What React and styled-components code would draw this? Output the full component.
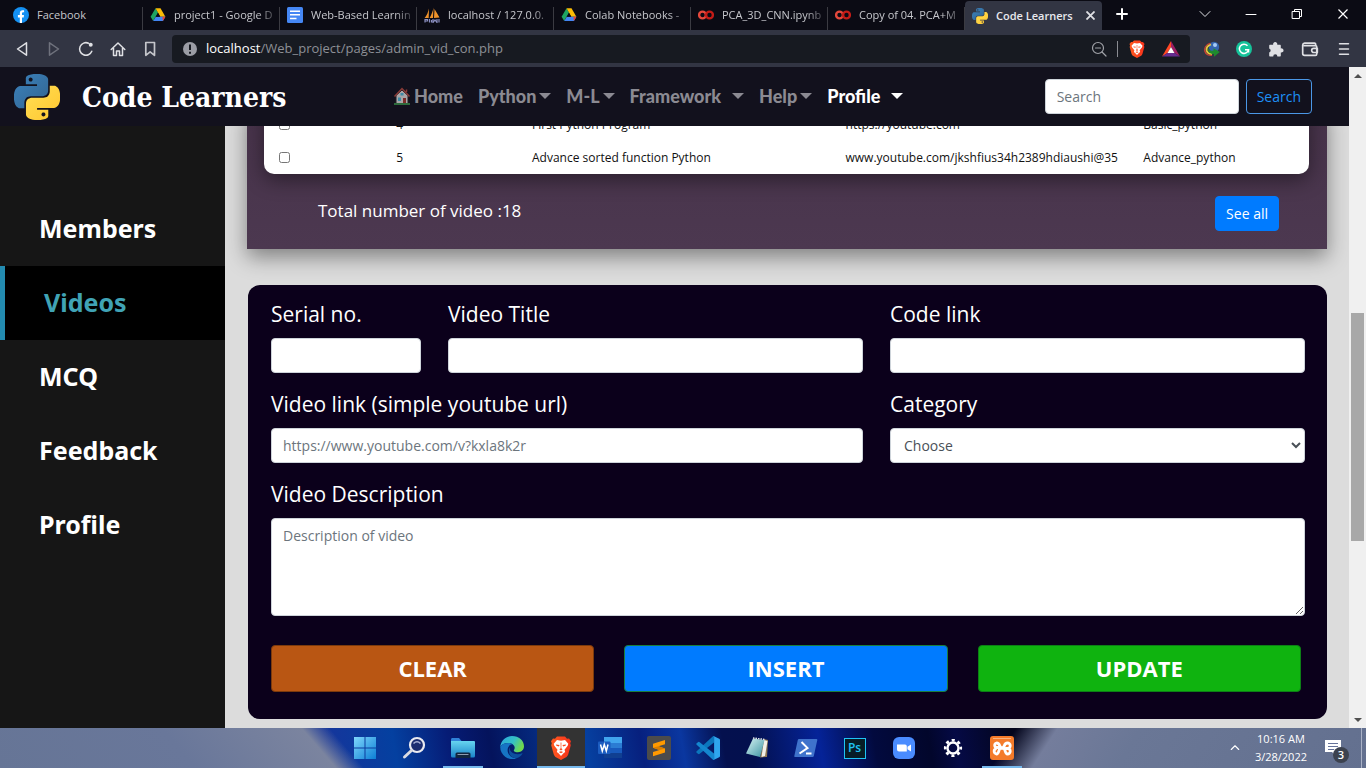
import React from "react";
import styled, { createGlobalStyle, css } from "styled-components";

const ui = `"Open Sans", "Noto Sans", sans-serif`;

const GlobalStyle = createGlobalStyle`
  *, *::before, *::after { box-sizing: border-box; }
  body { margin: 0; font-family: ${ui}; background: #dcdcdc; }
  button, input, select, textarea { font-family: inherit; margin: 0; }
  svg { display: block; flex: none; }
`;

const Desktop = styled.div`
  height: 100vh;
  display: flex;
  flex-direction: column;
  overflow: hidden;
`;

/* ---------- browser window ---------- */

const TabStrip = styled.header`
  height: 30px;
  flex: none;
  display: flex;
  padding-left: 6px;
  background: #0b0b14;
`;

const Tab = styled.div`
  flex: 0 1 137px;
  min-width: 0;
  display: flex;
  align-items: center;
  gap: 8px;
  padding: 0 4px 0 7px;
  font-size: 11px;
  line-height: 16px;
  color: #c6c7cc;
  background: linear-gradient(#3b3b42, #3b3b42) right 7px / 1px 23px no-repeat;
  ${(p) =>
    p.$active &&
    css`
      margin-top: 1px;
      color: #e8e9ee;
      font-weight: 600;
      background: #323543;
      border-radius: 4px 4px 0 0;
    `}
`;

const TabTitle = styled.span`
  flex: 1;
  min-width: 0;
  white-space: nowrap;
  ${(p) => p.$fade && css`mask-image: linear-gradient(90deg, #000 82%, rgba(0, 0, 0, 0.2));`}
`;

const IconButton = styled.button`
  flex: none;
  width: ${(p) => p.$width || 32}px;
  height: 28px;
  padding: 0;
  border: 0;
  background: none;
  color: ${(p) => p.$color || "#dfe0e4"};
  display: flex;
  align-items: center;
  justify-content: center;
`;

const NewTab = styled(IconButton)`
  margin-right: auto;
`;

const Toolbar = styled.div`
  height: 37px;
  flex: none;
  display: flex;
  align-items: center;
  padding: 0 6px;
  background: #323543;
`;

const AddressBar = styled.div`
  flex: 1;
  min-width: 0;
  height: 28px;
  display: flex;
  align-items: center;
  padding: 0 2px 0 10px;
  margin: 0 6px;
  border-radius: 4px;
  background: #171a21;
`;

const AddressInput = styled.div`
  flex: 1;
  min-width: 0;
  padding: 0 0 2px 8px;
  font-size: 13px;
  line-height: 20px;
  color: #8d9096;
  white-space: nowrap;
`;

const Host = styled.span`
  color: #fff;
`;

const Separator = styled.span`
  width: 1px;
  height: 16px;
  margin: 0 2px;
  background: #8a8c92;
`;

/* ---------- page ---------- */

const Viewport = styled.div`
  flex: 1;
  min-height: 0;
  display: flex;
`;

const Page = styled.div`
  flex: 1;
  min-width: 0;
  display: flex;
  flex-direction: column;
`;

const Navbar = styled.nav`
  position: relative;
  z-index: 2;
  height: 59px;
  flex: none;
  display: flex;
  align-items: center;
  padding: 0 37px 0 14px;
  background: #12111d;
`;

const Brand = styled.a`
  flex: none;
  width: 379px;
  display: flex;
  align-items: center;
  gap: 22px;
  color: #fff;
  text-decoration: none;
  white-space: nowrap;
  font: bold 28px/34px "DejaVu Serif Condensed", "DejaVu Serif", serif;
  font-stretch: condensed;
`;

const BrandName = styled.span`
  padding-top: 3px;
`;

const NavLinks = styled.ul`
  flex: 1;
  display: flex;
  gap: 15px;
  margin: 0;
  padding: 0 0 2px;
  list-style: none;
`;

const NavLink = styled.a`
  display: flex;
  align-items: center;
  gap: ${(p) => (p.$wide ? 11 : 3)}px;
  font: 900 18px/24px Lato, sans-serif;
  color: ${(p) => (p.$active ? "#fff" : "#8b8a92")};
  text-decoration: none;
  white-space: nowrap;
`;

const Caret = styled.span`
  border: 6px solid transparent;
  border-top-color: currentColor;
  border-bottom: 0;
`;

const SearchForm = styled.form`
  display: flex;
  align-items: center;
  gap: 7px;
`;

const control = css`
  width: 100%;
  height: 35px;
  padding: 0 11px;
  border: 1px solid #ced4da;
  border-radius: 4px;
  background: #fff;
  color: #495057;
  font-size: 14px;
  line-height: 20px;
  &::placeholder { color: #6c757d; opacity: 1; }
`;

const TextInput = styled.input`
  ${control}
`;

const SearchInput = styled(TextInput)`
  width: 194px;
`;

const SearchButton = styled.button`
  height: 35px;
  padding: 0 10px;
  border: 1px solid #4b97e6;
  border-radius: 4px;
  background: transparent;
  color: #1e90f5;
  font-size: 14px;
  line-height: 20px;
`;

const Body = styled.div`
  flex: 1;
  min-height: 0;
  display: flex;
`;

const Sidebar = styled.aside`
  flex: 0 0 225px;
  padding-top: 66px;
  background: #161616;
`;

const SideLink = styled.a`
  display: flex;
  align-items: center;
  height: 74px;
  padding: 0 0 3px 39px;
  font: bold 25px/36px "Noto Sans", sans-serif;
  color: #fff;
  text-decoration: none;
  ${(p) =>
    p.$active &&
    css`
      border-left: 5px solid #238bb0;
      background: #000;
      color: #40a3b5;
    `}
`;

const Main = styled.main`
  flex: 1;
  min-width: 0;
  overflow: hidden;
  padding: 0 22px;
  background: #dcdcdc;
`;

/* The list is scrolled so that only its last rows remain under the navbar. */
const ListPanel = styled.section`
  margin-top: -18px;
  padding: 0 18px 0 17px;
  background: linear-gradient(#47334a, #4c3850);
  box-shadow: 0 8px 20px rgba(0, 0, 0, 0.42);
`;

const VideoTable = styled.table`
  width: 100%;
  table-layout: fixed;
  border-spacing: 0;
  background: #fff;
  border-radius: 0 0 10px 10px;
  box-shadow: 0 6px 20px rgba(0, 0, 0, 0.42);
  font-size: 12px;
  line-height: 17px;
  color: #111;
`;

const Col = styled.col`
  width: ${(p) => p.$share}%;
`;

const Cell = styled.td`
  height: 33px;
  padding: 0 12px;
  white-space: nowrap;
`;

const RowCheck = styled.input`
  display: block;
  width: 11px;
  height: 11px;
  margin: 0 3px;
`;

const ListFooter = styled.div`
  display: flex;
  justify-content: space-between;
  align-items: center;
  padding: 22px 30px 18px 54px;
`;

const Total = styled.p`
  margin: 0 0 6px;
  color: #fff;
  font-size: 17px;
  line-height: 24px;
`;

const SeeAll = styled.button`
  height: 35px;
  padding: 0 10px;
  border: 1px solid #007bff;
  border-radius: 4px;
  background: #007bff;
  color: #fff;
  font-size: 14px;
  line-height: 20px;
`;

const VideoForm = styled.form`
  margin: 36px 0 9px 1px;
  padding: 14px 22px 27px 23px;
  border-radius: 12px;
  background: #0b001b;
`;

const Fields = styled.div`
  display: grid;
  grid-template-columns: 150fr 415fr 415fr;
  gap: 16px 27px;
`;

const Field = styled.div`
  min-width: 0;
  grid-column: span ${(p) => p.$span || 1};
  display: flex;
  flex-direction: column;
`;

const Label = styled.label`
  margin-bottom: 9px;
  color: #fff;
  font-size: 21px;
  line-height: 30px;
`;

const Select = styled.select`
  ${control}
  padding: 0 9px;
`;

const TextArea = styled.textarea`
  ${control}
  height: 98px;
  padding: 7px 11px;
`;

const Actions = styled.div`
  display: grid;
  grid-template-columns: repeat(3, 1fr);
  gap: 30px;
  margin: 29px 4px 0 0;
`;

const ActionButton = styled.button`
  height: 47px;
  padding: 0 0 2px;
  border: 1px solid ${(p) => p.$edge};
  border-radius: 4px;
  background: ${(p) => p.$fill};
  color: #fff;
  font-size: 22px;
  line-height: 30px;
  font-weight: 700;
`;

const Scrollbar = styled.div`
  flex: 0 0 17px;
  display: flex;
  flex-direction: column;
  align-items: center;
  background: #f0f0f0;
`;

const ScrollArrow = styled.span`
  height: 17px;
  display: flex;
  align-items: center;
  color: #505050;
`;

const ScrollGap = styled.span`
  flex: ${(p) => p.$grow};
`;

const ScrollThumb = styled.span`
  flex: 228;
  width: 13px;
  background: #a8a8a8;
`;

/* ---------- taskbar ---------- */

const Taskbar = styled.footer`
  height: 40px;
  flex: none;
  display: grid;
  grid-template-columns: 1fr auto 1fr;
  background:
    linear-gradient(49deg, #667596 0%, #69779a 14%, #7b849f 24%, transparent 26%),
    linear-gradient(123deg, transparent 73%, #747d9c 76%, #6a7796 82%, #63708f 100%),
    linear-gradient(
      80deg,
      #16359b 24%, #0440a0 29%, #061c76 33%, #04135c 36%, #0640a0 43%,
      #07207e 47%, #0a37a0 50%, #04104e 53%, #03104e 55%, #052398 60%,
      #020a3e 64%, #02062b 68%, #050a45 70%, #03051c 74%
    );
`;

const TaskIcons = styled.div`
  grid-column: 2;
  display: flex;
  gap: 1px;
`;

const TaskButton = styled.button`
  width: 48px;
  padding: 0;
  border: 0;
  display: flex;
  align-items: center;
  justify-content: center;
  background: ${(p) => (p.$active ? "#333" : "none")};
  ${(p) =>
    p.$bar &&
    css`
      background-image: linear-gradient(#76b9ed, #76b9ed);
      background-repeat: no-repeat;
      background-position: bottom center;
      background-size: ${p.$bar}px 2px;
    `}
`;

const Tray = styled.div`
  display: flex;
  align-items: center;
  justify-content: flex-end;
  gap: 14px;
  padding-right: 4px;
  color: #fff;
`;

const Clock = styled.time`
  font-size: 11px;
  line-height: 18px;
  text-align: center;
  white-space: pre-line;
`;

const Notices = styled.span`
  position: relative;
  display: flex;
  padding: 0 20px 0 4px;
  height: 40px;
  align-items: center;
  border-right: 1px solid #aab2c6;
`;

const NoticeCount = styled.span`
  position: absolute;
  left: 12px;
  top: 19px;
  width: 16px;
  height: 16px;
  border-radius: 50%;
  background: #3c424f;
  font-size: 11px;
  font-weight: 600;
  line-height: 16px;
  text-align: center;
`;

/* ---------- drawings ---------- */

const Python = ({ size }) => (
  <svg width={size} height={size} viewBox="0 0 24 24" aria-hidden="true">
    <defs>
      <linearGradient id="pyBlue" x2="1" y2="1"><stop stopColor="#3b82bd" /><stop offset="1" stopColor="#32648f" /></linearGradient>
      <linearGradient id="pyGold" x2="1" y2="1"><stop stopColor="#ffdf55" /><stop offset="1" stopColor="#ffc62f" /></linearGradient>
    </defs>
    <path fill="url(#pyBlue)" d="M14.25.18l.9.2.73.26.59.3.45.32.34.34.25.34.16.33.1.3.04.26.02.2-.01.13V8.5l-.05.63-.13.55-.21.46-.26.38-.3.31-.33.25-.35.19-.35.14-.33.1-.3.07-.26.04-.21.02H8.77l-.69.05-.59.14-.5.22-.41.27-.33.32-.27.35-.2.36-.15.37-.1.35-.07.32-.04.27-.02.21v3.06H3.17l-.21-.03-.28-.07-.32-.12-.35-.18-.36-.26-.36-.36-.35-.46-.32-.59-.28-.73-.21-.88-.14-1.05-.05-1.23.06-1.22.16-1.04.24-.87.32-.71.36-.57.4-.44.42-.33.42-.24.4-.16.36-.1.32-.05.24-.01h.16l.06.01h8.16v-.83H6.18l-.01-2.75-.02-.37.05-.34.11-.31.17-.28.25-.26.31-.23.38-.2.44-.18.51-.15.58-.12.64-.1.71-.06.77-.04.84-.02 1.27.05zm-6.3 1.98l-.23.33-.08.41.08.41.23.34.33.22.41.09.41-.09.33-.22.23-.34.08-.41-.08-.41-.23-.33-.33-.22-.41-.09-.41.09z" />
    <path fill="url(#pyGold)" d="M21.1 6.11l.28.06.32.12.35.18.36.27.36.35.35.47.32.59.28.73.21.88.14 1.04.05 1.23-.06 1.23-.16 1.04-.24.86-.32.71-.36.57-.4.45-.42.33-.42.24-.4.16-.36.09-.32.05-.24.02-.16-.01h-8.22v.82h5.84l.01 2.76.02.36-.05.34-.11.31-.17.29-.25.25-.31.24-.38.2-.44.17-.51.15-.58.13-.64.09-.71.07-.77.04-.84.01-1.27-.04-1.07-.14-.9-.2-.73-.25-.59-.3-.45-.33-.34-.34-.25-.34-.16-.33-.1-.3-.04-.25-.02-.2.01-.13v-5.34l.05-.64.13-.54.21-.46.26-.38.3-.32.33-.24.35-.2.35-.14.33-.1.3-.06.26-.04.21-.02.13-.01h5.84l.69-.05.59-.14.5-.21.41-.28.33-.32.27-.35.2-.36.15-.36.1-.35.07-.32.04-.28.02-.21V6.07h2.09l.14.01zm-6.47 14.25l-.23.33-.08.41.08.41.23.33.33.23.41.08.41-.08.33-.23.23-.33.08-.41-.08-.41-.23-.33-.33-.23-.41-.08-.41.08z" />
  </svg>
);

const Facebook = () => (
  <svg width="16" height="16" viewBox="0 0 16 16">
    <circle cx="8" cy="8" r="8" fill="#1490f2" />
    <path fill="#fff" d="M6.8 16v-5.6H4.9V8h1.9V6.4c0-2 1.1-3.1 2.8-3.1.8 0 1.5.1 1.5.1v1.9h-.9c-.9 0-1.2.6-1.2 1.2V8h2l-.3 2.4H9V16z" />
  </svg>
);

const Drive = () => (
  <svg width="16" height="16" viewBox="0 0 16 16">
    <path fill="#1ea362" d="M5.5 1.2 8 5.5 3.2 14 .6 9.7z" />
    <path fill="#fbbc04" d="M5.5 1.2h5l4.9 8.5h-5z" />
    <path fill="#4285f4" d="M5.8 9.7h9.6L12.9 14H3.2z" />
    <path fill="#ea4335" d="m12.9 14 2.5-4.3h-3z" />
    <path fill="#0b0b14" d="m8 6 2.1 3.7H5.9z" />
  </svg>
);

const Docs = () => (
  <svg width="16" height="16" viewBox="0 0 16 16">
    <rect width="16" height="16" rx="1.5" fill="#4587f4" />
    <path stroke="#fff" strokeWidth="1.6" d="M3 4.2h10M3 7.8h10M3 11.5h6.5" />
  </svg>
);

const Admin = () => (
  <svg width="16" height="16" viewBox="0 0 16 16">
    <path fill="#f0932b" d="M5 1.5 4.7 11H.6C2.7 8.5 4.3 5 5 1.5zM9.5.5 9 11H5.6C7.5 7.7 8.9 4 9.5.5zM10.5 2c1.5 2.6 3.7 6 5 8.600L10 11z" />
    <path stroke="#8b8fc0" strokeWidth="1.2" fill="none" d="M1 15.5v-3h2.500V14H1M5.5 12v3.500M7.5 15.500V13M9 12v3.500l2-2.500 2 2.500V12M15 12v3.500" />
  </svg>
);

const Colab = () => (
  <svg width="16" height="16" viewBox="0 0 16 16" fill="none" strokeWidth="2.4">
    <circle cx="4.5" cy="8" r="3.4" stroke="#e5483c" />
    <circle cx="11.5" cy="8" r="3.4" stroke="#c41c17" />
  </svg>
);

const Cross = ({ size = 10 }) => (
  <svg width={size} height={size} viewBox="0 0 10 10" fill="none" stroke="currentColor" strokeWidth={size > 9 ? 1.2 : 2}>
    <path d="M.5.5l9 9M9.5.5l-9 9" />
  </svg>
);

const Stroke = ({ size = 16, width = 1.5, children }) => (
  <svg width={size} height={size} viewBox="0 0 16 16" fill="none" stroke="currentColor" strokeWidth={width} strokeLinejoin="round" strokeLinecap="round">
    {children}
  </svg>
);

const Back = () => <Stroke><path d="M12.5 1.8v12.4L3.5 8z" /></Stroke>;
const Forward = () => <Stroke><path d="M3.5 1.8v12.4l9-6.2z" /></Stroke>;
const Reload = () => (
  <Stroke><path d="M13.8 10.2A6.3 6.3 0 1 1 10.5 2.2" /><circle cx="12.7" cy="3.8" r="2" fill="currentColor" stroke="none" /></Stroke>
);
const Home = () => <Stroke><path d="M1.2 8.5 8 2l6.8 6.5M3.5 7v7.5h3V10h3v4.5h3V7" /></Stroke>;
const Bookmark = () => <Stroke width={1.7}><path d="M3.8 1.5h8.7v12.8l-4.4-3.5-4.3 3.5z" /></Stroke>;
const ZoomOut = () => <Stroke width={1.2}><circle cx="7" cy="7" r="5.5" /><path d="m11 11 4 4M4.5 7h5" /></Stroke>;
const Menu = () => <Stroke width={1.5}><path d="M3.5 2.8h9M3.5 8h9M3.5 13.2h9" /></Stroke>;
const Wallet = () => (
  <Stroke size={18} width={1.5}><path d="M13 5V4a1 1 0 0 0-1-1.2H3.3A2 2 0 0 0 1.5 4.6V12A1.7 1.7 0 0 0 3.2 13.7h9.6a1.2 1.2 0 0 0 1.2-1.2V6.2A1.2 1.2 0 0 0 12.8 5H3M14.5 7.5h-3.2a1.8 1.8 0 0 0 0 3.6h3.2z" /></Stroke>
);

const SiteInfo = () => (
  <svg width="16" height="16" viewBox="0 0 16 16">
    <circle cx="8" cy="8" r="7" fill="#9b9da5" />
    <path stroke="#171a21" strokeWidth="2" d="M8 3.5v5.5M8 10.8v2" />
  </svg>
);

const Puzzle = () => (
  <svg width="16" height="16" viewBox="0 0 16 16">
    <path fill="currentColor" d="M2.2 3.8h3a2.1 2.1 0 1 1 4 0h2.6c.6 0 1 .4 1 1v2.6a2.1 2.1 0 1 1 0 4v3c0 .6-.4 1-1 1H9.4a2.1 2.1 0 0 0-4.2 0h-3c-.6 0-1-.4-1-1v-2.9a2.1 2.1 0 0 0 0-4V4.8c0-.6.4-1 1-1z" />
  </svg>
);

const Bat = () => (
  <svg width="18" height="16" viewBox="0 0 18 16">
    <path fill="#ff4724" d="M9 0 0 15.5 5.5 12 9 6z" />
    <path fill="#9e1f63" d="m9 0 9 15.5-5.5-3.5L9 6z" />
    <path fill="#662d91" d="M0 15.5 5.5 12h7l5.5 3.5z" />
    <path fill="#fff" d="m9 6 3.5 6h-7z" />
  </svg>
);

const Globe = () => (
  <svg width="16" height="16" viewBox="0 0 16 16">
    <circle cx="10" cy="6" r="5.2" fill="#3566ad" />
    <path fill="none" stroke="#c94234" strokeWidth="1.4" d="M6.5 2.2C2 3.5 0 7 1 10.5c.8 2.8 4 4.200 7 3.700" />
    <path fill="none" stroke="#e8c93c" strokeWidth="1.8" d="M7 3.5C3.5 4.8 2 7.5 2.8 10c.7 2 3 3 5.2 2.8" />
    <path fill="#1e8b2e" d="M4.5 6c-.5 3 1.500 4.300 5 3.500V7.200l6.300 3.800-5.800 4.700V13C6 13.200 2.800 10.500 4.500 6z" />
    <circle cx="11" cy="4" r="2" fill="#a5cbf5" />
  </svg>
);

const Grammarly = () => (
  <svg width="16" height="16" viewBox="0 0 16 16" fill="none">
    <circle cx="8" cy="8" r="8" fill="#15c39a" />
    <path stroke="#fff" strokeWidth="1.5" d="M11.5 4.8a4.6 4.6 0 1 0 1 4H9M12.5 8.5v3" />
  </svg>
);

const House = () => (
  <svg width="18" height="18" viewBox="0 0 18 18">
    <path fill="#a9a6a8" stroke="#232026" d="M3 8.5 9 3l6 5.5V17H3z" />
    <path stroke="#8a3b37" strokeWidth="1.5" fill="none" d="m1.5 9.5 7.5-8 7.5 8M13.5 2.5V5" />
    <path fill="#7d2c29" d="M10 11h3v6h-3z" />
    <path fill="#3d8ba6" d="M5 10.5h3V14H5zM7.5 6h3v2.5h-3z" />
    <path fill="#2d6b3c" d="M1 16h16v2H1z" />
  </svg>
);

const Brave = ({ size }) => (
  <svg width={size} height={size} viewBox="0 0 24 24">
    <defs><linearGradient id="lion" x2="1"><stop stopColor="#ff5a1f" /><stop offset="1" stopColor="#f7321c" /></linearGradient></defs>
    <path fill="url(#lion)" d="M8 .5h8l2 2.2 2-.2 2 2.8-.8 2 .6 1.9-2.6 9.3q-.5 1.5-1.7 2.4L12 24l-5.5-3.1q-1.200-.9-1.700-2.400L2.200 9.200l.6-1.900-.8-2 2-2.800 2 .2z" />
    <path fill="#fff" d="m8 4 4 .8L16 4l3.3 3.700-.6 2.100-3.200 3.900.7 2.200-1.700 1.300L12 20l-2.500-2.800-1.700-1.300.7-2.200-3.200-3.900-.6-2.100z" />
    <path fill="#fb4a1e" d="m7 8.600 3.600.5-.8 1.300-2.400-.7zM17 8.600l-3.600.5.8 1.300 2.400-.7zM11.600 6.500h.8l-.1 5.800 1.300 1-1.600 1.200-1.600-1.200 1.300-1zM9.800 16 12 15.200l2.200.8L12 17.200z" />
  </svg>
);

const WindowsLogo = () => (
  <svg width="22" height="22" viewBox="0 0 22 22">
    <defs>
      <linearGradient id="win" x2="1" y2="1"><stop stopColor="#7fd6fb" /><stop offset="1" stopColor="#0c7fd6" /></linearGradient>
    </defs>
    <path fill="url(#win)" d="M0 0h10.5v10.5H0zM11.5 0H22v10.5H11.5zM0 11.5h10.5V22H0zM11.5 11.5H22V22H11.5z" />
  </svg>
);

const Magnifier = () => (
  <svg width="24" height="24" viewBox="0 0 24 24" fill="none">
    <circle cx="15" cy="9" r="7" fill="#1b2c70" stroke="#e9eaf0" strokeWidth="2.2" />
    <path stroke="#aab2d8" strokeWidth="1.5" d="M11.5 7.5q3.5-3.5 7 0" />
    <path stroke="#d9dbe2" strokeWidth="3" strokeLinecap="round" d="m9.5 14.5-7 6.5" />
  </svg>
);

const Explorer = () => (
  <svg width="26" height="24" viewBox="0 0 26 24">
    <defs><linearGradient id="fold" x2="0" y2="1"><stop stopColor="#66d5f0" /><stop offset="1" stopColor="#1b84c9" /></linearGradient></defs>
    <path fill="#2f81d8" d="M1 3.5C1 2.7 1.5 2 2.500 2H9l2.500 3H1z" />
    <path fill="url(#fold)" d="M1 5h23q1 0 1 1v14q0 1.500-1.500 1.500h-21Q1 21.500 1 20z" />
    <path fill="#12263f" d="M5.5 22v-4q0-1.500 1.500-1.500h12q1.500 0 1.500 1.500v4z" />
    <path stroke="#8c9bb0" d="M7.5 18.5h11" />
  </svg>
);

const Edge = () => (
  <svg width="24" height="24" viewBox="0 0 24 24">
    <defs>
      <linearGradient id="edgeTop" x2="1" y2=".4"><stop stopColor="#2aa5e0" /><stop offset=".6" stopColor="#35c1c5" /><stop offset="1" stopColor="#6fd84f" /></linearGradient>
    </defs>
    <path fill="url(#edgeTop)" d="M.2 11C.8 4.5 6 0 12 0c7 0 12 4.8 12 10.3 0 3.5-2.7 5.9-6 5.9-2.6 0-4.2-.9-4.2-1.8 0-.6.9-1 .9-2.6C14.7 9.3 12 7 8.5 7 4.5 7 1.5 8.5.2 11z" />
    <path fill="#1674c4" d="M.2 11C1.5 8.5 4.5 7 8.500 7c1.700 0 3 .6 4 1.300C9.500 8.500 7.600 11 7.600 14c0 5 4.500 8.500 9 8.200A12 12 0 0 1 .2 11z" />
    <path fill="#0c4f9e" d="M9.700 11.200C8 13 8.300 22.400 16.600 22.200c2.600-.8 4.600-2.300 5.900-4.500.2-.4-.1-.6-.5-.4-4.500 2-12.500.7-12.300-6.100z" />
  </svg>
);

const Word = () => (
  <svg width="24" height="22" viewBox="0 0 24 22">
    <path fill="#41a5ee" d="M6 0h18v6H6z" />
    <path fill="#2b7cd3" d="M6 6h18v5H6z" />
    <path fill="#185abd" d="M6 11h18v5H6z" />
    <path fill="#103f91" d="M6 16h18v5H6z" />
    <rect y="4.5" width="12.5" height="12.5" rx="1" fill="#1b5cc0" />
    <path fill="none" stroke="#fff" strokeWidth="1.5" d="m2.5 7.5 1.8 6.5 2-6.500 2 6.500L10 7.500" />
  </svg>
);

const Sublime = () => (
  <svg width="24" height="24" viewBox="0 0 24 24">
    <rect width="24" height="24" rx="2" fill="#4b4b4b" />
    <path fill="#ff9a00" d="m6 7.8 12-3.8v4.200L11.500 10.300 18 12.400v4L6 20.200V16l6.500-2.100L6 11.800z" />
    <path fill="#d97e00" d="m6 11.800 6.500 2.100 5.500-1.500-6.500-2.100z" />
  </svg>
);

const VsCode = () => (
  <svg width="24" height="24" viewBox="0 0 24 24">
    <path fill="#0b76bd" d="M18 0v6.500L3 18.200l-.8-.1L.4 16.600v-1L17.200 0z" />
    <path fill="#1486cf" d="M18 24v-6.500L3 5.800l-.8.1L.4 7.400v1L17.200 24z" />
    <path fill="#2fa6ee" d="m17.500 0 5.700 2.700q.8.400.8 1.300v16q0 .9-.8 1.300L17.500 24q.6-.4.600-1.200V1.200q0-.8-.6-1.200z" />
  </svg>
);

const Notepad = () => (
  <svg width="24" height="24" viewBox="0 0 24 24">
    <defs><linearGradient id="note" x2="1" y2="1"><stop stopColor="#d8f4f4" /><stop offset="1" stopColor="#3b93a1" /></linearGradient></defs>
    <path fill="#8f7a56" d="m19 3 4 1-1 17-7 .5z" />
    <path fill="#f3f1e8" d="m19 4 3.500 1L20 20l-3.500 1z" />
    <path fill="url(#note)" d="M8 2.500 19.500 4 15 21 1 17.500z" />
    <path stroke="#dfe6e8" strokeWidth="1.5" strokeDasharray="1.5 1" d="M8 2 20 3.500" />
  </svg>
);

const PowerShell = () => (
  <svg width="24" height="20" viewBox="0 0 24 20">
    <path fill="#3f73cc" d="M5 1h17.500q1 0 .8 1l-3.500 16q-.2 1-1.200 1H1Q0 19 .3 18L3.800 2Q4 1 5 1z" />
    <path fill="none" stroke="#fff" strokeWidth="2" d="m7.500 4 6 6L5.500 15.500M12 15.500h5.500" />
  </svg>
);

const PsTile = styled.span`
  width: 22px;
  height: 21px;
  border: 1px solid #1fc4f4;
  background: #071d26;
  color: #1fc4f4;
  font-size: 12px;
  font-weight: 600;
  line-height: 18px;
`;

const Zoom = () => (
  <svg width="22" height="22" viewBox="0 0 22 22">
    <rect width="22" height="22" rx="6" fill="#4a8cff" />
    <path fill="#fff" d="M4 7.500h8q1.800 0 1.800 1.700v5.300H6q-2 0-2-2zM14.500 9.700 18 7.500v7l-3.500-2.200z" />
  </svg>
);

const Gear = () => (
  <svg width="20" height="20" viewBox="0 0 20 20" fill="none" stroke="#fff">
    <circle cx="10" cy="10" r="5.5" strokeWidth="2.4" />
    <circle cx="10" cy="10" r="7.800" strokeWidth="2.6" strokeDasharray="3.06 3.06" strokeDashoffset="1.53" />
  </svg>
);

const Xampp = () => (
  <svg width="24" height="24" viewBox="0 0 24 24">
    <rect width="24" height="24" rx="3" fill="#f47b2a" />
    <path stroke="#f9b27c" d="M3 2.500h18" />
    <path
      fill="none"
      stroke="#fff"
      strokeWidth="2.8"
      strokeLinecap="round"
      strokeLinejoin="round"
      d="M8 11.500H6.500a2.300 2.300 0 0 1 0-4.500C9 7 9.500 9 10 10.500q1 2 4 2c1.500 1 .8 5.500 3.500 5.500a2.700 2.700 0 0 0 0-5.500M16 12.500h1.500a2.700 2.700 0 0 0 0-5.500C15 7 14.500 9 14 10.500q-1 2-4 2c-1.500 1-.8 5.500-3.500 5.500a2.700 2.700 0 0 1-1-5"
    />
  </svg>
);

const Triangle = ({ down }) => (
  <svg width="8" height="4" viewBox="0 0 8 4">
    <path fill="currentColor" d={down ? "M0 0h8L4 4z" : "M0 4h8L4 0z"} />
  </svg>
);

const tabs = [
  ["Facebook", Facebook],
  ["project1 - Google D", Drive, true],
  ["Web-Based Learnin", Docs, true],
  ["localhost / 127.0.0.", Admin, true],
  ["Colab Notebooks -", Drive, true],
  ["PCA_3D_CNN.ipynb", Colab, true],
  ["Copy of 04. PCA+M", Colab, true],
];

const menus = [
  { label: "Python" },
  { label: "M-L" },
  { label: "Framework", wide: true },
  { label: "Help" },
  { label: "Profile", wide: true, active: true },
];

const videos = [
  [4, "First Python Program", "https://youtube.com", "Basic_python"],
  [5, "Advance sorted function Python", "www.youtube.com/jkshfius34h2389hdiaushi@35", "Advance_python"],
];

const apps = [
  { name: "Start", icon: <WindowsLogo /> },
  { name: "Search", icon: <Magnifier /> },
  { name: "Explorer", icon: <Explorer />, bar: 40 },
  { name: "Edge", icon: <Edge /> },
  { name: "Brave", icon: <Brave size={24} />, bar: 48, active: true },
  { name: "Word", icon: <Word /> },
  { name: "Sublime Text", icon: <Sublime /> },
  { name: "VS Code", icon: <VsCode /> },
  { name: "Notepad", icon: <Notepad /> },
  { name: "PowerShell", icon: <PowerShell /> },
  { name: "Photoshop", icon: <PsTile>Ps</PsTile> },
  { name: "Zoom", icon: <Zoom /> },
  { name: "Settings", icon: <Gear /> },
  { name: "XAMPP", icon: <Xampp />, bar: 40 },
];

const BrowserChrome = () => (
  <>
    <TabStrip>
      {tabs.map(([title, Icon, fade]) => (
        <Tab key={title}>
          <Icon />
          <TabTitle $fade={fade}>{title}</TabTitle>
        </Tab>
      ))}
      <Tab $active>
        <Python size={16} />
        <TabTitle>Code Learners</TabTitle>
        <IconButton $width={16} aria-label="Close tab"><Cross size={9} /></IconButton>
      </Tab>
      <NewTab $width={40} $color="#fff" aria-label="New tab">
        <Stroke width={2}><path d="M8 3v10M3 8h10" /></Stroke>
      </NewTab>
      <IconButton $width={46} aria-label="Search tabs"><Stroke width={1}><path d="m3 5.5 5 5 5-5" /></Stroke></IconButton>
      <IconButton $width={46} $color="#fff" aria-label="Minimize"><Stroke width={1}><path d="M3 8.5h10" /></Stroke></IconButton>
      <IconButton $width={46} $color="#fff" aria-label="Restore"><Stroke width={1}><path d="M3.5 5.5h7v7h-7zM5.5 5.5v-2h7v7h-2" /></Stroke></IconButton>
      <IconButton $width={46} $color="#fff" aria-label="Close"><Cross /></IconButton>
    </TabStrip>
    <Toolbar>
      <IconButton aria-label="Back"><Back /></IconButton>
      <IconButton $color="#6f727d" aria-label="Forward"><Forward /></IconButton>
      <IconButton aria-label="Reload"><Reload /></IconButton>
      <IconButton aria-label="Home"><Home /></IconButton>
      <IconButton $color="#c5c6cb" aria-label="Bookmark"><Bookmark /></IconButton>
      <AddressBar>
        <SiteInfo />
        <AddressInput><Host>localhost</Host>/Web_project/pages/admin_vid_con.php</AddressInput>
        <IconButton $color="#a0a2a8" aria-label="Zoom"><ZoomOut /></IconButton>
        <Separator />
        <IconButton $width={34} aria-label="Brave Shields"><Brave size={18} /></IconButton>
        <IconButton $width={34} aria-label="Rewards"><Bat /></IconButton>
      </AddressBar>
      <IconButton aria-label="Download manager"><Globe /></IconButton>
      <IconButton aria-label="Grammarly"><Grammarly /></IconButton>
      <IconButton aria-label="Extensions"><Puzzle /></IconButton>
      <IconButton $width={36} aria-label="Wallet"><Wallet /></IconButton>
      <IconButton aria-label="Menu"><Menu /></IconButton>
    </Toolbar>
  </>
);

export default function App() {
  return (
    <Desktop>
      <GlobalStyle />
      <BrowserChrome />
      <Viewport>
        <Page>
          <Navbar>
            <Brand href="#"><Python size={46} /><BrandName>Code Learners</BrandName></Brand>
            <NavLinks>
              <li><NavLink href="#home"><House />Home</NavLink></li>
              {menus.map((m) => (
                <li key={m.label}>
                  <NavLink href="#" $wide={m.wide} $active={m.active}>{m.label}<Caret /></NavLink>
                </li>
              ))}
            </NavLinks>
            <SearchForm>
              <SearchInput type="text" placeholder="Search" aria-label="Search" />
              <SearchButton type="button">Search</SearchButton>
            </SearchForm>
          </Navbar>
          <Body>
            <Sidebar>
              {["Members", "Videos", "MCQ", "Feedback", "Profile"].map((name) => (
                <SideLink key={name} href="#" $active={name === "Videos"}>{name}</SideLink>
              ))}
            </Sidebar>
            <Main>
              <ListPanel>
                <VideoTable>
                  <colgroup>
                    <Col $share={11.5} /><Col $share={13} /><Col $share={30} /><Col $share={28.5} /><Col $share={17} />
                  </colgroup>
                  <tbody>
                    {videos.map(([no, title, link, category]) => (
                      <tr key={no}>
                        <Cell><RowCheck type="checkbox" aria-label={`Select video ${no}`} /></Cell>
                        <Cell>{no}</Cell>
                        <Cell>{title}</Cell>
                        <Cell>{link}</Cell>
                        <Cell>{category}</Cell>
                      </tr>
                    ))}
                  </tbody>
                </VideoTable>
                <ListFooter>
                  <Total>Total number of video :18</Total>
                  <SeeAll type="button">See all</SeeAll>
                </ListFooter>
              </ListPanel>
              <VideoForm>
                <Fields>
                  <Field><Label htmlFor="serial">Serial no.</Label><TextInput id="serial" /></Field>
                  <Field><Label htmlFor="title">Video Title</Label><TextInput id="title" /></Field>
                  <Field><Label htmlFor="code">Code link</Label><TextInput id="code" /></Field>
                  <Field $span={2}>
                    <Label htmlFor="link">Video link (simple youtube url)</Label>
                    <TextInput id="link" placeholder="https://www.youtube.com/v?kxla8k2r" />
                  </Field>
                  <Field>
                    <Label htmlFor="category">Category</Label>
                    <Select id="category"><option>Choose</option></Select>
                  </Field>
                  <Field $span={3}>
                    <Label htmlFor="description">Video Description</Label>
                    <TextArea id="description" placeholder="Description of video" />
                  </Field>
                </Fields>
                <Actions>
                  <ActionButton type="reset" $fill="#b95613" $edge="#7c3a0c">CLEAR</ActionButton>
                  <ActionButton type="button" $fill="#007bff" $edge="#1a7f3c">INSERT</ActionButton>
                  <ActionButton type="button" $fill="#0fb30f" $edge="#0c7f16">UPDATE</ActionButton>
                </Actions>
              </VideoForm>
            </Main>
          </Body>
        </Page>
        <Scrollbar>
          <ScrollArrow><Triangle /></ScrollArrow>
          <ScrollGap $grow={229} />
          <ScrollThumb />
          <ScrollGap $grow={170} />
          <ScrollArrow><Triangle down /></ScrollArrow>
        </Scrollbar>
      </Viewport>
      <Taskbar>
        <TaskIcons>
          {apps.map((a) => (
            <TaskButton key={a.name} aria-label={a.name} $active={a.active} $bar={a.bar}>{a.icon}</TaskButton>
          ))}
        </TaskIcons>
        <Tray>
          <Stroke size={12}><path d="m3 10 5-5 5 5" /></Stroke>
          <Clock>{"10:16 AM\n3/28/2022"}</Clock>
          <Notices>
            <svg width="16" height="16" viewBox="0 0 16 16">
              <path fill="#fff" d="M0 0h16v12h-5v4l-4-4H0z" />
              <path stroke="#66739a" d="M3 3.5h10M3 6.5h10M3 9.5h6" />
            </svg>
            <NoticeCount>3</NoticeCount>
          </Notices>
        </Tray>
      </Taskbar>
    </Desktop>
  );
}
